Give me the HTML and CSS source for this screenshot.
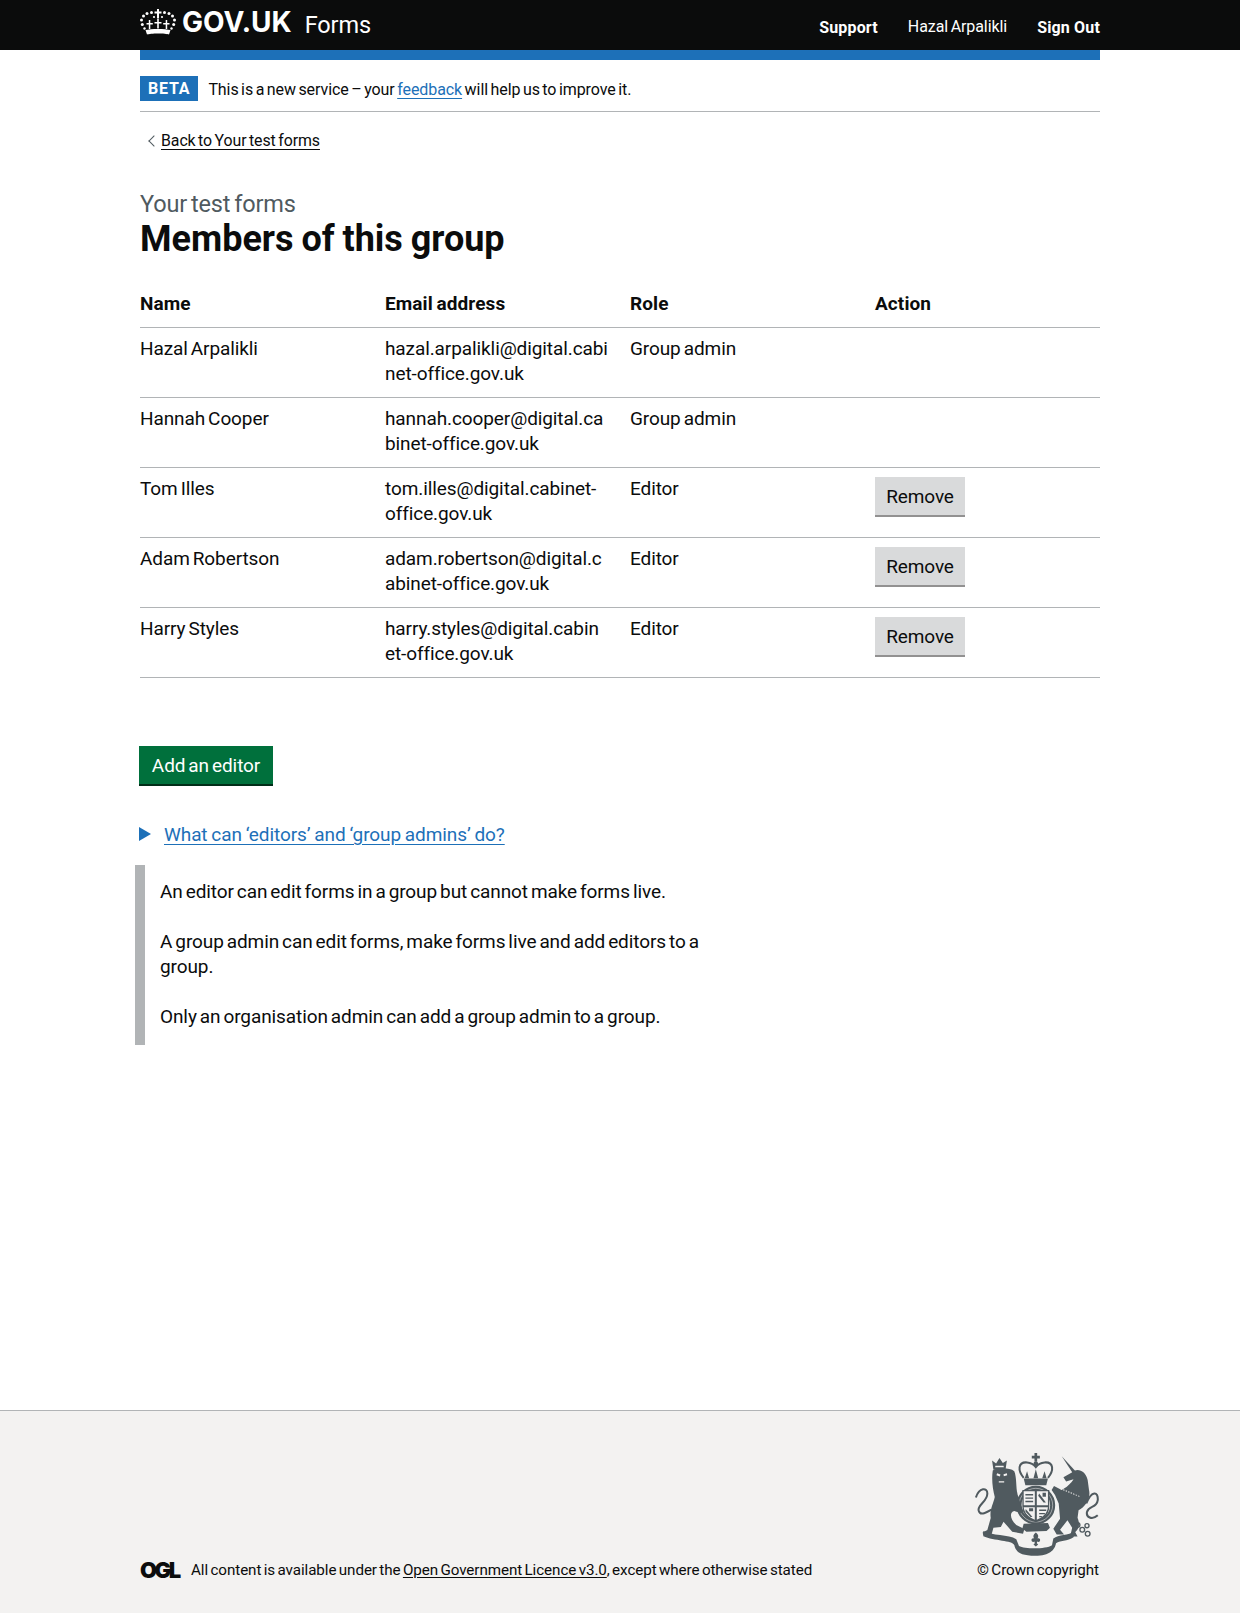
FILE: index.html
```html
<!DOCTYPE html>
<html lang="en">
<head>
<meta charset="utf-8">
<title>Members of this group – GOV.UK Forms</title>
<link rel="stylesheet" href="styles.css">
</head>
<body>
<header class="site-header">
  <div class="header-inner">
    <a class="brand" href="#">
      <svg class="crown" viewBox="0 0 36 26" width="36" height="26" aria-hidden="true">
        <g fill="#fff">
          <path d="M7 25.500c3-1.500 19-1.500 22 0l1.500-4.500c-5-1.500-20-1.500-25 0z"/>
          <path d="M17 0h2v2.500h2.500v2H19V9.500h-2V4.500h-2.500v-2H17z"/>
          <circle cx="11.500" cy="3.500" r="1.500"/><circle cx="24.500" cy="3.500" r="1.500"/>
          <circle cx="7" cy="4.500" r="1.500"/><circle cx="29" cy="4.500" r="1.500"/>
          <circle cx="3.500" cy="7" r="1.500"/><circle cx="32.500" cy="7" r="1.500"/>
          <circle cx="1.500" cy="11" r="1.500"/><circle cx="34.500" cy="11" r="1.500"/>
          <circle cx="2.300" cy="15.500" r="1.500"/><circle cx="33.700" cy="15.500" r="1.500"/>
          <circle cx="4.500" cy="19.500" r="1.200"/><circle cx="31.500" cy="19.500" r="1.200"/>
          <path d="M17.200 10h1.600v3h2.700v1.600h-2.700v5h-1.600v-5h-2.700V13h2.700z"/>
          <path d="M8.800 11h1.500v3h2.500v1.500h-2.500v4.500H8.800v-4.500H6.500V14h2.300z"/>
          <path d="M25.700 11h1.500v3h2.300v1.500h-2.300v4.500h-1.500v-4.500h-2.500V14h2.500z"/>
          <circle cx="14" cy="8" r="1.100"/><circle cx="22" cy="8" r="1.100"/>
        </g>
      </svg>
      <span class="brand-name">GOV.UK</span>
      <span class="brand-product">Forms</span>
    </a>
    <nav class="header-nav">
      <a href="#" class="nav-strong">Support</a>
      <span class="nav-user">Hazal Arpalikli</span>
      <a href="#" class="nav-strong">Sign Out</a>
    </nav>
  </div>
</header>
<div class="page-width">
  <div class="blue-bar"></div>
  <div class="phase-banner">
    <strong class="phase-tag">BETA</strong>
    <span class="phase-text">This is a new service – your <a class="link" href="#">feedback</a> will help us to improve it.</span>
  </div>
  <a class="back-link" href="#">Back to Your test forms</a>
  <main class="main">
    <span class="caption">Your test forms</span>
    <h1 class="title">Members of this group</h1>
    <table class="members">
      <thead>
        <tr><th>Name</th><th>Email address</th><th>Role</th><th>Action</th></tr>
      </thead>
      <tbody>
        <tr><td>Hazal Arpalikli</td><td>hazal.arpalikli@digital.cabi<br>net-office.gov.uk</td><td>Group admin</td><td></td></tr>
        <tr><td>Hannah Cooper</td><td>hannah.cooper@digital.ca<br>binet-office.gov.uk</td><td>Group admin</td><td></td></tr>
        <tr><td>Tom Illes</td><td>tom.illes@digital.cabinet-<br>office.gov.uk</td><td>Editor</td><td><button class="btn-secondary">Remove</button></td></tr>
        <tr><td>Adam Robertson</td><td>adam.robertson@digital.c<br>abinet-office.gov.uk</td><td>Editor</td><td><button class="btn-secondary">Remove</button></td></tr>
        <tr><td>Harry Styles</td><td>harry.styles@digital.cabin<br>et-office.gov.uk</td><td>Editor</td><td><button class="btn-secondary">Remove</button></td></tr>
      </tbody>
    </table>
    <button class="btn-primary">Add an editor</button>
    <details class="details" open>
      <summary class="details-summary"><span class="details-text">What can ‘editors’ and ‘group admins’ do?</span></summary>
      <div class="details-body">
        <p>An editor can edit forms in a group but cannot make forms live.</p>
        <p>A group admin can edit forms, make forms live and add editors to a group.</p>
        <p>Only an organisation admin can add a group admin to a group.</p>
      </div>
    </details>
  </main>
</div>
<footer class="site-footer">
  <div class="footer-inner">
    <div class="licence">
      <span class="ogl">OGL</span>
      <span>All content is available under the <a class="footer-link" href="#">Open Government Licence v3.0</a>, except where otherwise stated</span>
    </div>
    <div class="copyright">
      <svg class="crest" viewBox="48 40 367 306" width="124" height="103" aria-hidden="true">
        <g fill="#505a5f">
          <!-- royal crown -->
          <path d="M224 40h8v8h8v8h-8v10h-8V56h-8v-8h8z"/>
          <circle cx="228" cy="72" r="7"/>
          <path fill="none" stroke="#505a5f" stroke-width="6" d="M192 114c-18-22-18-48 10-46 12 1 20 6 26 14 6-8 14-13 26-14 28-2 28 24 10 46"/>
          <path d="M228 88l7 27h-14zM202 94l6 21h-13zM254 94l6 21h-13z"/>
          <path d="M192 116h72l-5 20h-62z"/>
          <!-- garter ring -->
          <circle cx="228" cy="195" r="50" fill="none" stroke="#505a5f" stroke-width="15"/>
          <circle cx="228" cy="195" r="50" fill="none" stroke="#f3f2f1" stroke-width="1.500"/>
          <!-- shield -->
          <path d="M188 150h80v50c0 24-20 38-40 46-20-8-40-22-40-46z"/>
          <path fill="#f3f2f1" d="M192 154h33v41h-33zM231 154h33v41h-33zM192 201h33v37c-16-7-31-18-33-37zM231 201h33c-2 19-17 30-33 37z"/>
          <path d="M197 162h23v4h-23zM197 172h23v4h-23zM197 182h23v4h-23zM238 160l20 27h-7l-16-20zM248 158h10v12h-10zM198 206l20 24h-6l-15-16zM208 204h12v9h-12zM238 208h21v4h-21zM238 218h17v4h-17zM238 227h8v4h-8z"/>
          <!-- lion crown -->
          <path fill-rule="evenodd" d="M98 62l12 9 10-16 10 15 12-8-4 28h-36zM108 78l-1 4h26l-1-4z"/>
          <!-- lion -->
          <path d="M100 92c10-8 50-10 64 2 8 20 4 46 10 70l14 42 4 8-4 6-24-8c-14 2-14 24 6 42l24 12-4 14-32-6-26-30-8 16-22 2-6 22H72l-2-8 14-7 10-36c-4-24 8-42 12-62-6-24-10-52-6-78z"/>
          <path fill="#f3f2f1" d="M113 100l10 4-2 6-10-4zM132 103l10-3 1 6-10 3zM118 124h16v4h-16z"/>
          <!-- lion tail -->
          <path fill="none" stroke="#505a5f" stroke-width="6" d="M96 208c-18 10-34 20-38 2-3-16 26-26 26-50 0-18-24-18-34 12"/>
          <!-- unicorn -->
          <path d="M305 50l41 44-8 6z"/>
          <path d="M335 98c15-16 41-6 47 22l4 30c6 25-11 50-31 60l-3 22c6 16 8 30-7 43l7 13h-22l6-26-14-22-22 28 12 14h-22l-10-17 20-30-4-45-11-25-10-15 7-12 23 12 15-10c12-10 18-18 20-22l-22 7-8-13z"/>
          <path fill="none" stroke="#f3f2f1" stroke-width="3" stroke-dasharray="4 4" d="M302 146l58 24"/>
          <path fill="none" stroke="#505a5f" stroke-width="6" d="M378 190c16-40 36-36 34-10-3 25-27 15-32 35-3 15 14 26 32 10"/>
          <g fill="none" stroke="#505a5f" stroke-width="4">
            <circle cx="352" cy="254" r="7"/><circle cx="366" cy="268" r="7"/><circle cx="382" cy="280" r="7"/><circle cx="380" cy="256" r="6"/>
          </g>
          <!-- garter buckle -->
          <path d="M192 250l72-2 6 14-10 10-60 2-12-10z"/>
          <!-- fleur -->
          <path d="M228 276c8 6 9 12 5 18 5-2 10 2 7 8-2 3-6 3-8 1l-1 5 4 4-7 6-7-6 4-4-1-5c-2 2-6 2-8-1-3-6 2-10 7-8-4-6-3-12 5-18z"/>
          <!-- ribbon -->
          <path d="M72 272c24 14 76 10 98 24l8 20c18 10 80 10 98-2l4-20c16-14 42-6 66-24l-6 20c-16 12-44 10-52 18-4 20-18 37-62 37s-58-12-62-32c-6-14-60-12-92-26z"/>
        </g>
      </svg>
      <span>© Crown copyright</span>
    </div>
  </div>
</footer>
</body>
</html>
```
FILE: styles.css
```css
* { box-sizing: border-box; letter-spacing: -0.005em; word-spacing: -0.085em; }
html, body { margin: 0; padding: 0; }
body {
  font-family: "Roboto", "Liberation Sans", sans-serif;
  color: #0b0c0c;
  background: #fff;
  min-height: 1613px;
  display: flex;
  flex-direction: column;
  font-size: 19px;
}
a { color: inherit; }

.site-header { background: #0b0c0c; height: 50px; color: #fff; }
.header-inner { width: 960px; margin: 0 auto; height: 50px; display: flex; justify-content: space-between; }
.brand { display: flex; align-items: flex-start; color: #fff; text-decoration: none; padding-top: 9px; }
.crown { flex: none; margin-right: 6px; }
.brand-name { font-family: "Inter", sans-serif; font-weight: 700; font-size: 28px; line-height: 29px; margin-top: -1px; letter-spacing: 0; }
.brand-product { font-size: 23.500px; line-height: 32px; margin-left: 13px; font-weight: 400; }
.header-nav { display: flex; gap: 30px; font-size: 16px; padding-top: 16px; line-height: 22px; }
.nav-strong { color: #fff; text-decoration: none; font-weight: 700; padding-top: 1px; letter-spacing: 0.01em; word-spacing: 0; }
.nav-user { color: #fff; }

.page-width { width: 960px; margin: 0 auto; }
.blue-bar { height: 10px; background: #1d70b8; }
.phase-banner { display: flex; align-items: center; gap: 10px; padding: 16px 0 10px; border-bottom: 1px solid #b1b4b6; font-size: 16px; line-height: 25px; }
.phase-tag { background: #1d70b8; color: #fff; font-size: 16px; font-weight: 700; height: 25px; line-height: 25px; padding: 0 8px; letter-spacing: 0.05em; }
.phase-text { position: relative; top: 1px; }
.link { color: #1d70b8; text-decoration: underline; text-underline-offset: 3px; }
.back-link { display: inline-block; position: relative; margin: 19px 0 0 21px; font-size: 15.900px; line-height: 20px; text-underline-offset: 3px; }
.back-link::before { content: ""; position: absolute; left: -11px; top: 6px; width: 7px; height: 7px; border-left: 1px solid #505a5f; border-bottom: 1px solid #505a5f; transform: rotate(45deg); }

.main { padding-top: 38px; }
.caption { display: block; color: #505a5f; font-size: 23.500px; line-height: 30px; }
.title { margin: 0 0 32px; font-size: 36px; line-height: 40px; font-weight: 700; letter-spacing: 0; word-spacing: -0.03em; }

.members { width: 960px; border-collapse: collapse; table-layout: fixed; margin-bottom: 68px; font-size: 19px; line-height: 25px; }
.members th { text-align: left; font-weight: 700; padding: 0 20px 11px 0; width: 245px; border-bottom: 1px solid #b1b4b6; line-height: 25px; letter-spacing: 0.005em; word-spacing: -0.06em; }
.members th:last-child { width: 225px; padding-right: 0; }
.members td { padding: 8px 20px 10px 0; vertical-align: top; border-bottom: 1px solid #b1b4b6; height: 70px; white-space: nowrap; }
.members td:last-child { padding-right: 0; }

.btn-secondary { display: block; font: inherit; height: 40px; width: 90px; margin-top: 1px; padding: 0; color: #0b0c0c; background: #d9dadb; border: 0; border-bottom: 2px solid #929191; }
.btn-primary { display: block; font: inherit; color: #fff; background: #00703c; border: 0; border-bottom: 2px solid #002d18; height: 40px; width: 134px; margin: 0 0 0 -1px; padding: 0; }

.details { margin-top: 36px; }
.details-summary { display: block; position: relative; padding-left: 25px; list-style: none; line-height: 25px; margin-left: -1px; cursor: pointer; }
.details-summary::before { content: ""; position: absolute; left: 0; top: 5px; border-left: 12px solid #1d70b8; border-top: 7px solid transparent; border-bottom: 7px solid transparent; }
.details-text { color: #1d70b8; text-decoration: underline; text-underline-offset: 3px; word-spacing: -0.04em; }
.details-body { margin: 18px 0 0 -5px; padding: 14px 15px 16px; border-left: 10px solid #b1b4b6; width: 600px; line-height: 25px; }
.details-body p { margin: 0 0 25px; }
.details-body p:last-child { margin: 0; }

.site-footer { margin-top: auto; background: #f3f2f1; border-top: 1px solid #b1b4b6; height: 203px; font-size: 15.200px; }
.footer-inner { width: 960px; margin: 0 auto; height: 100%; display: flex; justify-content: space-between; align-items: flex-end; padding-bottom: 33px; }
.licence { display: flex; align-items: center; gap: 10px; line-height: 20px; }
.ogl { font-family: "Inter", sans-serif; font-weight: 900; font-size: 22px; letter-spacing: -2.500px; line-height: 20px; width: 41px; }
.footer-link { text-underline-offset: 2px; }
.copyright { display: flex; flex-direction: column; align-items: flex-end; gap: 4px; line-height: 20px; padding-right: 1px; }
.crest { display: block; }
```
